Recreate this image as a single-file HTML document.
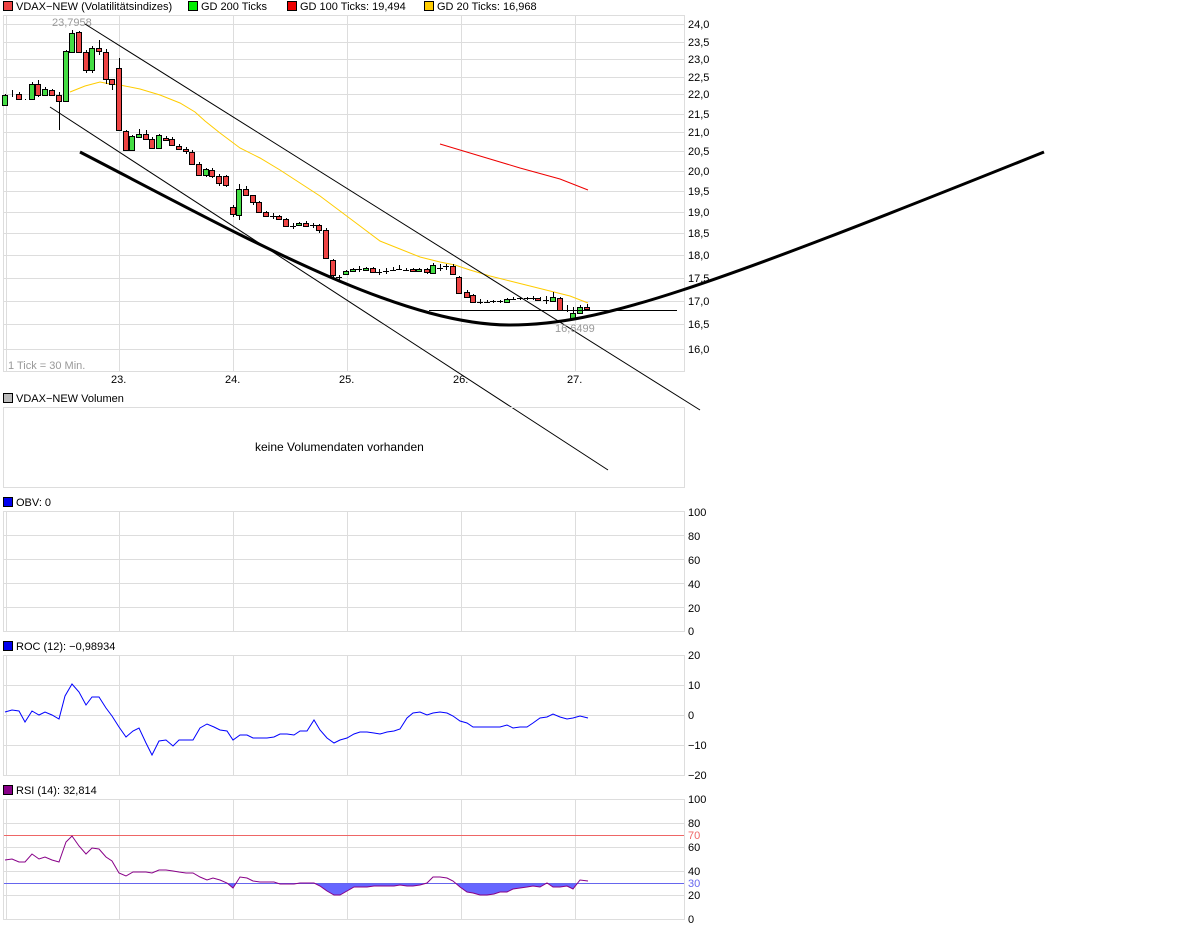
<!DOCTYPE html>
<html><head><meta charset="utf-8"><style>
html,body{margin:0;padding:0;background:#fff;width:1180px;height:928px;overflow:hidden}
svg{display:block}
text{font-family:"Liberation Sans",sans-serif;font-size:11px;fill:#000}
</style></head><body>
<svg width="1180" height="928" viewBox="0 0 1180 928" xmlns="http://www.w3.org/2000/svg">
<defs><clipPath id="below"><rect x="0" y="883" width="700" height="40"/></clipPath></defs>
<!-- legends -->
<rect x="3.5" y="1.5" width="9" height="9" fill="#ee4444" stroke="#000"/>
<text x="16" y="10">VDAX−NEW (Volatilitätsindizes)</text>
<rect x="188.5" y="1.5" width="9" height="9" fill="#00ee00" stroke="#000"/>
<text x="201" y="10">GD 200 Ticks</text>
<rect x="287.5" y="1.5" width="9" height="9" fill="#ee0000" stroke="#000"/>
<text x="300" y="10">GD 100 Ticks: 19,494</text>
<rect x="424.5" y="1.5" width="9" height="9" fill="#ffcc00" stroke="#000"/>
<text x="437" y="10">GD 20 Ticks: 16,968</text>

<!-- main panel -->
<g stroke="#dddddd" stroke-width="1" fill="none">
<rect x="3.5" y="15.5" width="681" height="356"/>
<line x1="6.5" y1="15" x2="6.5" y2="371"/>
<path d="M119.5 15V371M233.5 15V371M347.5 15V371M461.5 15V371M575.5 15V371"/>
<path d="M4 24.5H684M4 42.5H684M4 59.5H684M4 77.5H684M4 94.5H684M4 114.5H684M4 132.5H684M4 151.5H684M4 171.5H684M4 191.5H684M4 212.5H684M4 233.5H684M4 255.5H684M4 278.5H684M4 301.5H684M4 324.5H684M4 349.5H684"/>
</g>
<g>
<text x="688" y="28">24,0</text><text x="688" y="46">23,5</text><text x="688" y="63">23,0</text><text x="688" y="81">22,5</text><text x="688" y="98">22,0</text><text x="688" y="118">21,5</text><text x="688" y="136">21,0</text><text x="688" y="155">20,5</text><text x="688" y="175">20,0</text><text x="688" y="195">19,5</text><text x="688" y="216">19,0</text><text x="688" y="237">18,5</text><text x="688" y="259">18,0</text><text x="688" y="282">17,5</text><text x="688" y="305">17,0</text><text x="688" y="328">16,5</text><text x="688" y="353">16,0</text>
</g>
<text x="111" y="383">23.</text><text x="225" y="383">24.</text><text x="339" y="383">25.</text><text x="453" y="383">26.</text><text x="567" y="383">27.</text>
<text x="8" y="369" style="fill:#999">1 Tick = 30 Min.</text>
<text x="52" y="26" style="fill:#999">23,7958</text>

<polyline fill="none" stroke="#ffcc00" stroke-width="1" points="70,92 85,86 100,82 110,84 120,85 140,89 160,95 180,103 195,112 205,121 220,133 240,148 260,158 280,170 300,183 320,196 340,211 360,226 380,241 400,249 420,257 440,262 455,265 470,270 490,276 510,281 530,286 550,291 570,296 588,303"/>
<polyline fill="none" stroke="#ee0000" stroke-width="1" points="440,144 480,156 520,168 560,179 588,190"/>

<g stroke="#000" stroke-width="1">
<path d="M5.5 94V106M12.5 90V97M19.5 92V100M25.5 99V100M32.5 82V100M38.5 80V97M45.5 87V96M52.5 89V96M59.5 92V130M66.5 50V102M72.5 30V53M79.5 31V53M86.5 50V73M92.5 46V73M99.5 40V55M106.5 49V84M112.5 79V90M119.5 58V131M126.5 130V151M132.5 135V151M139.5 129V138M146.5 130V140M152.5 137V149M159.5 134V149M166.5 136V141M172.5 137V146M179.5 144V150M186.5 147V154M192.5 150V165M199.5 162V176M206.5 168V177M212.5 168V178M219.5 174V186M226.5 175V187M233.5 205V217M239.5 184V220M246.5 186V196M253.5 195V205M259.5 201V213M266.5 211V217M273.5 213V219M279.5 215V220M286.5 218V227M293.5 223V229M299.5 222V226M306.5 221V227M313.5 223V228M319.5 224V233M326.5 228V259M333.5 259V277M339.5 275V281M346.5 270V275M353.5 268V272M359.5 266V272M366.5 267V271M373.5 267V273M379.5 269V275M386.5 268V274M393.5 267V271M399.5 265V270M406.5 268V271M413.5 268V272M419.5 268V272M427.5 268V274M433.5 263V274M440.5 264V271M446.5 264V270M453.5 264V275M459.5 276V294M467.5 290V298M473.5 294V303M480.5 299V304M487.5 300V303M493.5 300V303M500.5 300V303M507.5 298V303M513.5 297V300M520.5 297V300M527.5 297V300M533.5 296V300M540.5 297V301M546.5 296V304M553.5 292V302M560.5 297V310M567.5 305V312M573.5 307V319M580.5 305V314M587.5 304V310"/>
</g>
<g stroke="#000" stroke-width="1">
<g fill="#44dd44">
<rect x="2.5" y="95.5" width="5" height="10"/><rect x="29.5" y="84.5" width="5" height="15"/><rect x="42.5" y="89.5" width="5" height="6"/><rect x="63.5" y="51.5" width="5" height="50"/><rect x="69.5" y="33.5" width="5" height="19"/><rect x="89.5" y="48.5" width="5" height="22"/><rect x="129.5" y="136.5" width="5" height="14"/><rect x="136.5" y="134.5" width="5" height="3"/><rect x="156.5" y="135.5" width="5" height="13"/><rect x="203.5" y="169.5" width="5" height="6"/><rect x="236.5" y="189.5" width="5" height="26"/><rect x="296.5" y="223.5" width="5" height="2"/><rect x="343.5" y="271.5" width="5" height="3"/><rect x="350.5" y="269.5" width="5" height="2"/><rect x="363.5" y="268.5" width="5" height="2"/><rect x="416.5" y="269.5" width="5" height="2"/><rect x="430.5" y="265.5" width="5" height="8"/><rect x="504.5" y="299.5" width="5" height="3"/><rect x="550.5" y="297.5" width="5" height="4"/><rect x="570.5" y="313.5" width="5" height="5"/><rect x="577.5" y="307.5" width="5" height="6"/>
</g>
<g fill="#ee4444">
<rect x="16.5" y="94.5" width="5" height="5"/><rect x="35.5" y="84.5" width="5" height="11"/><rect x="49.5" y="90.5" width="5" height="5"/><rect x="56.5" y="95.5" width="5" height="6"/><rect x="76.5" y="32.5" width="5" height="20"/><rect x="83.5" y="52.5" width="5" height="18"/><rect x="96.5" y="48.5" width="5" height="3"/><rect x="103.5" y="52.5" width="5" height="27"/><rect x="109.5" y="79.5" width="5" height="5"/><rect x="116.5" y="68.5" width="5" height="62"/><rect x="123.5" y="131.5" width="5" height="19"/><rect x="143.5" y="134.5" width="5" height="5"/><rect x="149.5" y="139.5" width="5" height="9"/><rect x="163.5" y="138.5" width="5" height="2"/><rect x="169.5" y="139.5" width="5" height="6"/><rect x="176.5" y="146.5" width="5" height="3"/><rect x="183.5" y="149.5" width="5" height="2"/><rect x="189.5" y="152.5" width="5" height="12"/><rect x="196.5" y="164.5" width="5" height="11"/><rect x="209.5" y="170.5" width="5" height="6"/><rect x="216.5" y="176.5" width="5" height="7"/><rect x="223.5" y="176.5" width="5" height="9"/><rect x="230.5" y="207.5" width="5" height="7"/><rect x="243.5" y="189.5" width="5" height="6"/><rect x="250.5" y="195.5" width="5" height="7"/><rect x="256.5" y="202.5" width="5" height="10"/><rect x="263.5" y="212.5" width="5" height="4"/><rect x="276.5" y="216.5" width="5" height="3"/><rect x="283.5" y="219.5" width="5" height="7"/><rect x="303.5" y="223.5" width="5" height="3"/><rect x="316.5" y="225.5" width="5" height="5"/><rect x="323.5" y="230.5" width="5" height="28"/><rect x="330.5" y="260.5" width="5" height="15"/><rect x="370.5" y="268.5" width="5" height="4"/><rect x="410.5" y="269.5" width="5" height="2"/><rect x="424.5" y="269.5" width="5" height="3"/><rect x="450.5" y="266.5" width="5" height="8"/><rect x="456.5" y="277.5" width="5" height="16"/><rect x="464.5" y="292.5" width="5" height="5"/><rect x="470.5" y="295.5" width="5" height="7"/><rect x="535.5" y="298.5" width="5" height="2"/><rect x="557.5" y="298.5" width="5" height="12"/><rect x="584.5" y="307.5" width="5" height="2"/>
</g>
<path d="M270 216.5H276M290 226.5H296M310 225.5H316M336 277.5H342M356 269.5H362M376 272.5H382M383 271.5H389M390 270.5H396M396 269.5H402M403 270.5H409M437 268.5H443M443 266.5H449M477 302.5H483M484 302.5H490M490 301.5H496M497 301.5H503M510 299.5H516M517 298.5H523M524 298.5H530M530 298.5H536M543 300.5H549M564 310.5H570"/>
</g>

<g stroke="#000" stroke-width="1" fill="none">
<line x1="85" y1="24" x2="700" y2="410"/>
<line x1="50" y1="107" x2="608" y2="470"/>
<line x1="429" y1="310.5" x2="677" y2="310.5"/>
</g>
<path d="M80 152 C 250 240 400 325 510 325 C 600 325 700 290 1044 152" fill="none" stroke="#000" stroke-width="3"/>
<text x="555" y="332" style="fill:#999">16,6499</text>

<rect x="3.5" y="393.5" width="9" height="9" fill="#bbbbbb" stroke="#000"/>
<text x="16" y="402">VDAX−NEW Volumen</text>
<rect x="3.5" y="407.5" width="681" height="80" fill="none" stroke="#dddddd"/>
<text x="255" y="451" style="font-size:12px">keine Volumendaten vorhanden</text>

<rect x="3.5" y="497.5" width="9" height="9" fill="#0000ee" stroke="#000"/>
<text x="16" y="506">OBV: 0</text>
<g stroke="#dddddd" fill="none">
<rect x="3.5" y="511.5" width="681" height="120"/>
<line x1="6.5" y1="511" x2="6.5" y2="631"/>
<path d="M119.5 511V631M233.5 511V631M347.5 511V631M461.5 511V631M575.5 511V631M4 535.5H684M4 559.5H684M4 583.5H684M4 607.5H684"/>
</g>
<text x="688" y="516">100</text><text x="688" y="540">80</text><text x="688" y="564">60</text><text x="688" y="588">40</text><text x="688" y="612">20</text><text x="688" y="635">0</text>

<rect x="3.5" y="641.5" width="9" height="9" fill="#0000ee" stroke="#000"/>
<text x="16" y="650">ROC (12): −0,98934</text>
<g stroke="#dddddd" fill="none">
<rect x="3.5" y="655.5" width="681" height="120"/>
<line x1="6.5" y1="655" x2="6.5" y2="775"/>
<path d="M119.5 655V775M233.5 655V775M347.5 655V775M461.5 655V775M575.5 655V775M4 685.5H684M4 715.5H684M4 745.5H684"/>
</g>
<text x="688" y="659">20</text><text x="688" y="689">10</text><text x="688" y="719">0</text><text x="688" y="749">−10</text><text x="688" y="779">−20</text>
<polyline fill="none" stroke="#0000ff" stroke-width="1" points="5,712 12,710 19,711 25,722 32,711 39,715 45,712 52,715 59,719 65,696 72,684 79,692 86,705 92,697 99,697 106,708 112,716 119,727 126,737 133,731 139,728 146,743 152,755 159,741 166,740 173,746 179,740 186,740 193,740 200,728 207,724 214,727 220,730 227,731 233,740 240,735 247,735 253,738 260,738 267,738 274,737 280,734 287,734 294,735 300,731 307,731 314,720 320,730 327,738 334,743 340,740 347,738 354,734 360,732 367,732 374,733 380,734 387,732 394,731 400,729 407,718 413,713 420,712 427,715 433,713 440,712 447,713 453,716 460,721 467,723 473,727 480,727 500,727 507,725 513,728 520,727 527,727 533,723 540,718 547,717 553,714 560,717 567,719 573,718 580,716 588,718"/>

<rect x="3.5" y="785.5" width="9" height="9" fill="#880088" stroke="#000"/>
<text x="16" y="794">RSI (14): 32,814</text>
<g stroke="#dddddd" fill="none">
<rect x="3.5" y="799.5" width="681" height="120"/>
<line x1="6.5" y1="799" x2="6.5" y2="919"/>
<path d="M119.5 799V919M233.5 799V919M347.5 799V919M461.5 799V919M575.5 799V919M4 823.5H684M4 847.5H684M4 871.5H684M4 895.5H684"/>
</g>
<line x1="4" y1="835.5" x2="684" y2="835.5" stroke="#ee6666"/>
<polygon clip-path="url(#below)" fill="#6666ff" points="5,860 12,859 19,862 25,862 32,854 39,859 45,857 52,860 59,862 66,842 72,836 79,846 86,854 92,848 99,849 106,857 112,861 119,873 126,876 133,872 139,872 146,872 152,873 159,870 166,870 173,871 179,872 186,873 193,873 200,877 207,880 213,878 220,880 227,883 233,888 240,877 247,878 253,881 260,882 274,882 280,884 287,884 294,884 300,883 314,883 320,886 327,891 334,895 340,895 347,891 354,887 367,887 374,886 380,886 387,886 394,886 400,885 407,886 413,886 420,885 427,883 433,877 440,877 447,878 453,881 460,887 467,892 473,893 480,895 487,895 494,894 500,892 507,892 513,889 520,888 527,887 533,886 540,887 547,883 553,887 560,887 567,886 573,889 580,880 588,881 588,883 5,883"/>
<line x1="4" y1="883.5" x2="684" y2="883.5" stroke="#6666ee"/>
<polyline fill="none" stroke="#880088" stroke-width="1" points="5,860 12,859 19,862 25,862 32,854 39,859 45,857 52,860 59,862 66,842 72,836 79,846 86,854 92,848 99,849 106,857 112,861 119,873 126,876 133,872 139,872 146,872 152,873 159,870 166,870 173,871 179,872 186,873 193,873 200,877 207,880 213,878 220,880 227,883 233,888 240,877 247,878 253,881 260,882 274,882 280,884 287,884 294,884 300,883 314,883 320,886 327,891 334,895 340,895 347,891 354,887 367,887 374,886 380,886 387,886 394,886 400,885 407,886 413,886 420,885 427,883 433,877 440,877 447,878 453,881 460,887 467,892 473,893 480,895 487,895 494,894 500,892 507,892 513,889 520,888 527,887 533,886 540,887 547,883 553,887 560,887 567,886 573,889 580,880 588,881"/>
<text x="688" y="803">100</text><text x="688" y="827">80</text><text x="688" y="839" style="fill:#ee6666">70</text><text x="688" y="851">60</text><text x="688" y="875">40</text><text x="688" y="887" style="fill:#6666ee">30</text><text x="688" y="899">20</text><text x="688" y="923">0</text>
</svg>
</body></html>
